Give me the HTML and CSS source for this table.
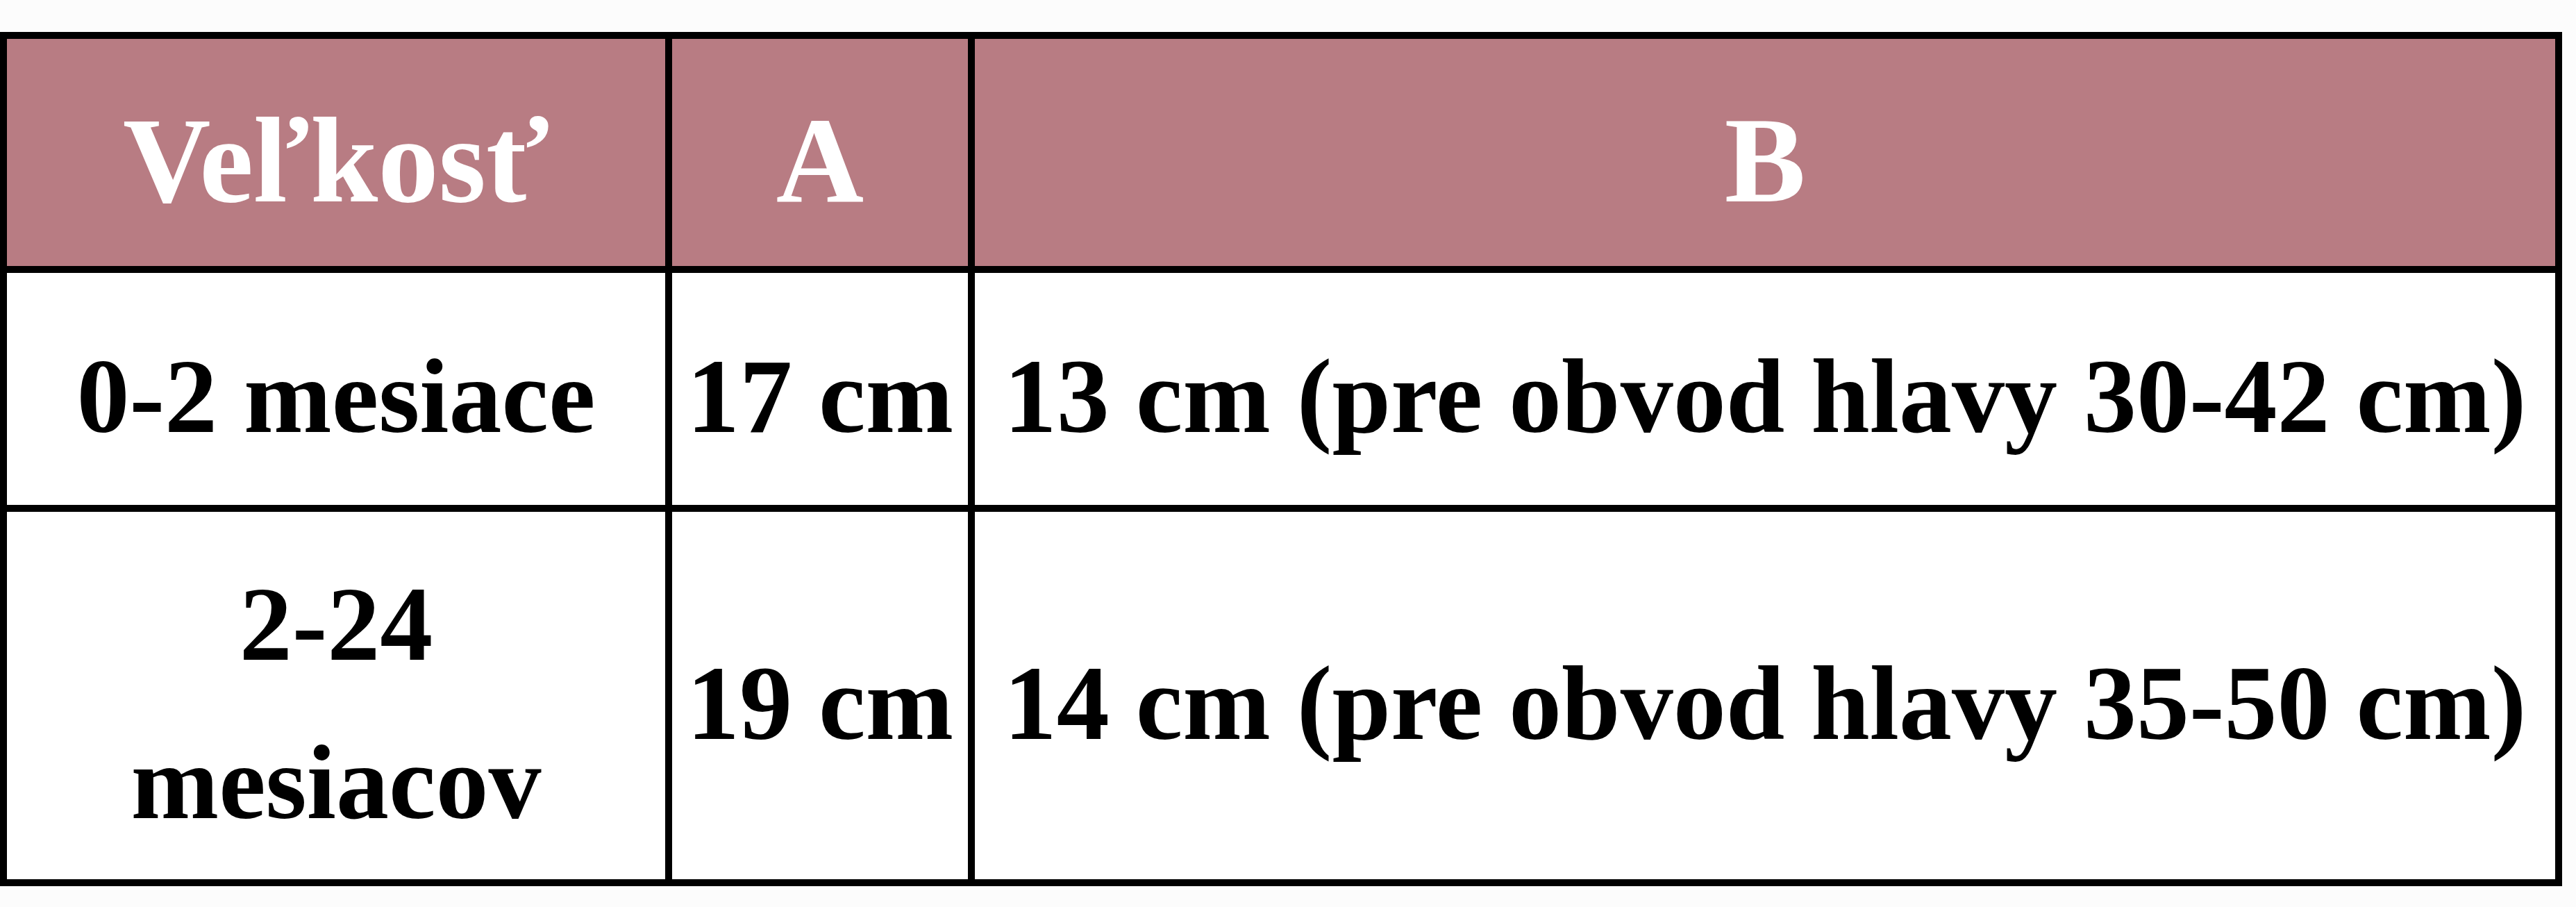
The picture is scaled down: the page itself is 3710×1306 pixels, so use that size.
FILE: index.html
```html
<!DOCTYPE html>
<html lang="sk">
<head>
<meta charset="utf-8">
<title>Veľkosť</title>
<link rel="stylesheet" href="styles.css">
</head>
<body>
<table class="size-table">
  <thead>
    <tr class="head-row">
      <th class="col-size">Veľkosť</th>
      <th class="col-a">A</th>
      <th class="col-b">B</th>
    </tr>
  </thead>
  <tbody>
    <tr class="row-one">
      <td class="col-size">0-2 mesiace</td>
      <td class="col-a">17 cm</td>
      <td class="col-b">13 cm (pre obvod hlavy 30-42 cm)</td>
    </tr>
    <tr class="row-two">
      <td class="col-size">2-24 mesiacov</td>
      <td class="col-a">19 cm</td>
      <td class="col-b">14 cm (pre obvod hlavy 35-50 cm)</td>
    </tr>
  </tbody>
</table>
</body>
</html>
```

FILE: styles.css
```css
html, body {
  margin: 0;
  padding: 0;
  background: #fcfcfc;
}

body {
  padding-top: 46px;
  font-family: "Liberation Serif", "Times New Roman", serif;
}

.size-table {
  border-collapse: separate;
  border-spacing: 0;
  table-layout: fixed;
  width: 3690px;
}

.size-table th,
.size-table td {
  box-sizing: border-box;
  padding: 22px 35px 0 35px;
  text-align: center;
  vertical-align: middle;
  border-right: 10px solid #000;
  border-bottom: 10px solid #000;
  font-weight: 700;
}

.size-table th:first-child,
.size-table td:first-child {
  border-left: 10px solid #000;
}

.head-row th {
  border-top: 10px solid #000;
  background: #b87c83;
  color: #ffffff;
  font-size: 175px;
  line-height: 200px;
  height: 347px;
}

.size-table td {
  background: #ffffff;
  color: #000000;
  font-size: 152px;
  line-height: 228px;
}

.row-one td {
  height: 344px;
}

.row-two td {
  height: 539px;
}

.size-table .col-size {
  width: 968px;
}

.size-table .col-a {
  width: 436px;
  white-space: nowrap;
  padding-left: 0;
  padding-right: 0;
}

.size-table .col-b {
  width: 2286px;
  white-space: nowrap;
  padding-left: 10px;
  padding-right: 10px;
}
```
